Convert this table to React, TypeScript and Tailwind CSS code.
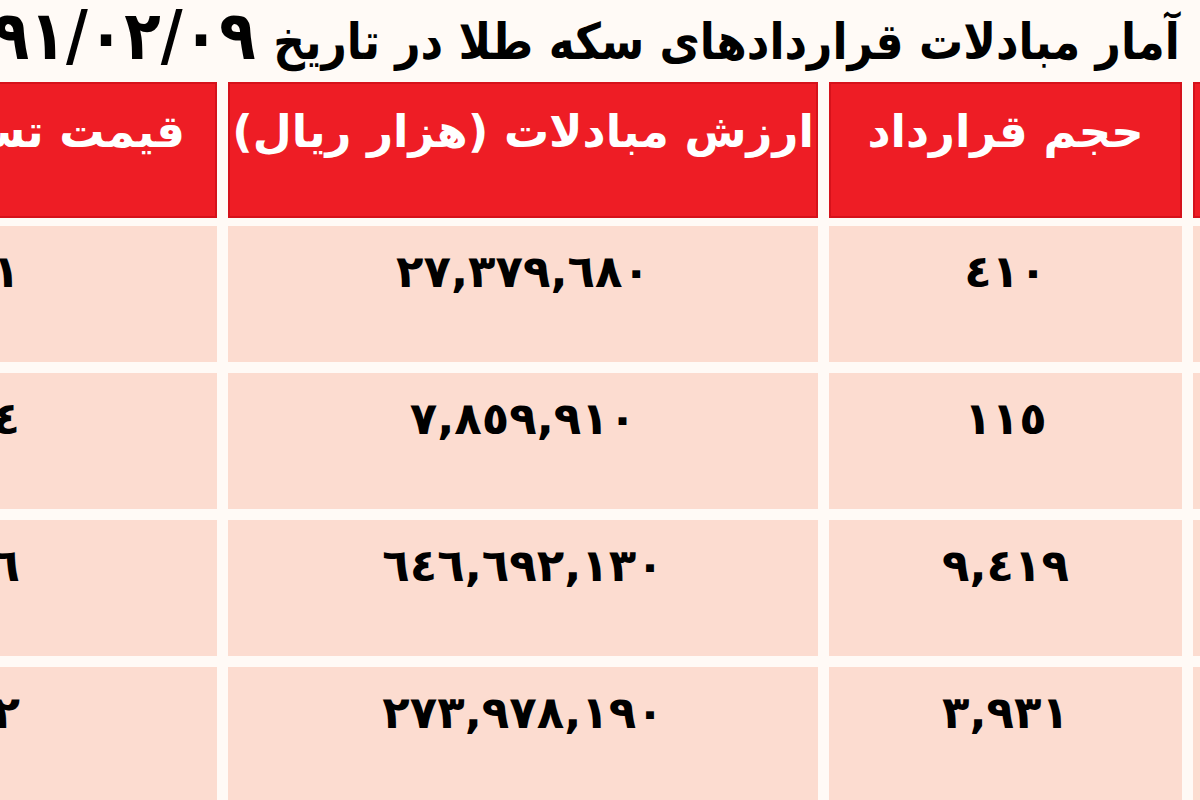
const titleWords = 'آمار مبادلات قراردادهای سکه طلا در تاریخ';
const titleDate = '۱۳۹۱/۰۲/۰۹';

const rows = [
  { price: '١٢,٤٥٠,٠٠١', value: '٢٧,٣٧٩,٦٨٠', volume: '٤١٠' },
  { price: '١٣,٦٥٠,٠٠٤', value: '٧,٨٥٩,٩١٠', volume: '١١٥' },
  { price: '١٣,٧٢٠,٠٠٦', value: '٦٤٦,٦٩٢,١٣٠', volume: '٩,٤١٩' },
  { price: '١٣,٩٦٠,٠٠٢', value: '٢٧٣,٩٧٨,١٩٠', volume: '٣,٩٣١' },
];

const gridCols = 'grid grid-cols-[100px_353px_590px_590px] gap-x-[11px] mr-[-93px]';

export default function App() {
  return (
    <div
      dir="rtl"
      className="w-[1200px] h-[800px] overflow-hidden bg-[#fffaf6]"
      style={{ fontFamily: '"DejaVu Sans", sans-serif' }}
    >
      {/* title, date runs off the left edge */}
      <div className="h-[82px] overflow-hidden whitespace-nowrap pr-[20px] flex items-start">
        <h1 className="font-bold text-black leading-[72px] origin-right scale-x-[0.88]">
          <span className="text-[50px]">{titleWords}</span>
          <span className="text-[68px] mr-[20px]">{titleDate}</span>
        </h1>
      </div>

      <div className={`${gridCols} h-[136px] mb-[8px]`}>
        <div className="bg-[#ee1d25] border-2 border-[#d5121b]" />
        <div className="bg-[#ee1d25] border-2 border-[#d5121b] flex justify-center pt-[16px]">
          <span className="text-[45px] font-bold text-white leading-[64px]">حجم قرارداد</span>
        </div>
        <div className="bg-[#ee1d25] border-2 border-[#d5121b] flex justify-center pt-[16px] whitespace-nowrap overflow-hidden">
          <span className="text-[45px] font-bold text-white leading-[64px]">ارزش مبادلات (هزار ریال)</span>
        </div>
        <div className="bg-[#ee1d25] border-2 border-[#d5121b] flex justify-start pr-[30px] pt-[16px] whitespace-nowrap">
          <span className="text-[45px] font-bold text-white leading-[64px]">قیمت تسویه (ریال)</span>
        </div>
      </div>

      <div className="flex flex-col gap-[11px]">
        {rows.map((r, i) => (
          <div key={i} className={`${gridCols} h-[136px]`}>
            <div className="bg-[#fcdcd0]" />
            <div className="bg-[#fcdcd0] flex justify-center pt-[16px]">
              <span className="text-[45px] font-bold text-black leading-[60px]">{r.volume}</span>
            </div>
            <div className="bg-[#fcdcd0] flex justify-center pt-[16px]">
              <span className="text-[45px] font-bold text-black leading-[60px]">{r.value}</span>
            </div>
            <div className="bg-[#fcdcd0] flex justify-start pr-[197px] pt-[16px] whitespace-nowrap">
              <span className="text-[45px] font-bold text-black leading-[60px]">{r.price}</span>
            </div>
          </div>
        ))}
      </div>
    </div>
  );
}
